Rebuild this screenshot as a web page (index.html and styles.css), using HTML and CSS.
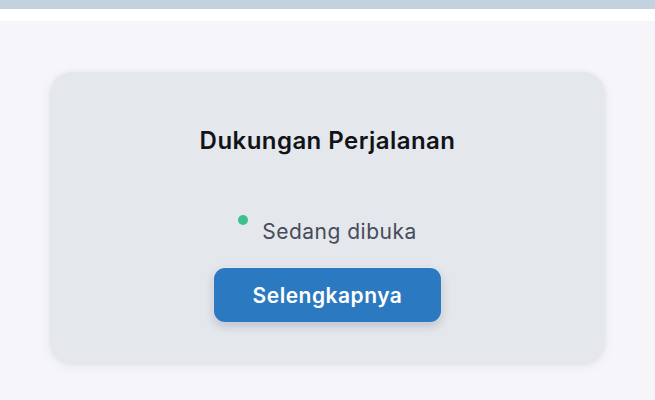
FILE: index.html
```html
<!DOCTYPE html>
<html lang="id">
<head>
<meta charset="utf-8">
<link rel="stylesheet" href="styles.css">
</head>
<body>
<div class="topbar"></div>
<div class="band"></div>
<main class="main">
  <section class="card">
    <h1 class="title">Dukungan Perjalanan</h1>
    <div class="status">
      <span class="dot"></span>
      <span class="status-text">Sedang dibuka</span>
    </div>
    <button class="btn">Selengkapnya</button>
  </section>
</main>
</body>
</html>
```
FILE: styles.css
```css
* { box-sizing: border-box; }
html, body { margin: 0; padding: 0; }
body {
  width: 655px;
  height: 400px;
  overflow: hidden;
  background: #f6f6fa;
  font-family: Inter, "Noto Sans", sans-serif;
}
.topbar {
  height: 9px;
  background: #c2d3df;
}
.band {
  height: 12px;
  background: #ffffff;
}
.main {
  padding: 51px 50px 0;
}
.card {
  height: 291px;
  background: #e4e7eb;
  border-radius: 22px;
  box-shadow: 0 3px 10px rgba(60, 70, 90, 0.10), 0 0 4px rgba(60, 70, 90, 0.05);
  display: flex;
  flex-direction: column;
  align-items: center;
  padding-top: 55px;
}
.title {
  margin: 0;
  font-size: 24px;
  line-height: 28px;
  font-weight: 600;
  color: #121317;
  letter-spacing: 0.45px;
}
.status {
  margin-top: 65px;
  display: flex;
  align-items: flex-start;
  height: 24px;
}
.dot {
  width: 10px;
  height: 10px;
  border-radius: 50%;
  background: #3ec08e;
  margin-top: -5px;
  margin-right: 14px;
}
.status-text {
  font-size: 21px;
  line-height: 24px;
  color: #474b5c;
  letter-spacing: 0.5px;
}
.btn {
  margin-top: 24px;
  height: 54px;
  width: 227px;
  padding: 0;
  border: none;
  border-radius: 11px;
  background: #2b79c0;
  color: #ffffff;
  font-family: Inter, "Noto Sans", sans-serif;
  font-size: 21px;
  font-weight: 600;
  letter-spacing: 0.5px;
  box-shadow: 0 4px 10px rgba(40, 60, 90, 0.22), 0 0 0 1px rgba(255,255,255,0.35);
}
```
